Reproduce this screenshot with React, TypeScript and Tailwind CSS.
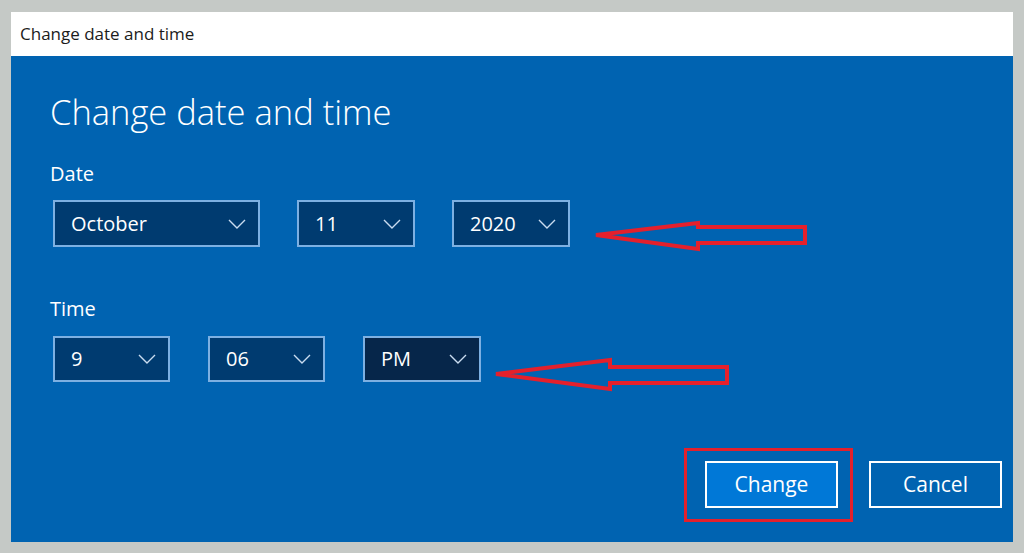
const font = { fontFamily: '"Open Sans", "Noto Sans", Arial, sans-serif' };

function Chevron() {
  return (
    <svg width="18" height="10" viewBox="0 0 18 10" className="text-[#c9dcf0]">
      <polyline points="1,1 9,9 17,1" fill="none" stroke="currentColor" strokeWidth="1.4" />
    </svg>
  );
}

function Dropdown({
  value,
  width,
  height,
  dark,
}: {
  value: string;
  width: string;
  height: string;
  dark?: boolean;
}) {
  return (
    <div
      className={`flex items-center justify-between border-2 border-[#7db0e2] pl-[16px] pr-[12px] text-[20px] text-white ${width} ${height} ${
        dark ? "bg-[#06264a]" : "bg-[#003b70]"
      }`}
    >
      <span>{value}</span>
      <Chevron />
    </div>
  );
}

function Arrows() {
  return (
    <svg
      className="pointer-events-none absolute inset-0 h-full w-full"
      viewBox="0 0 1002 486"
      preserveAspectRatio="none"
    >
      <polygon
        points="585,179 687,167 687,171 794,171 794,187 687,187 687,193"
        fill="none"
        stroke="#e4202c"
        strokeWidth="4"
      />
      <polygon
        points="485,318 599,304 599,311 716,311 716,327 599,327 599,333"
        fill="none"
        stroke="#e4202c"
        strokeWidth="4"
      />
    </svg>
  );
}

export default function App() {
  return (
    <div
      className="h-[553px] w-[1024px] overflow-hidden bg-[#c5c9c6] pb-[11px] pl-[11px] pr-[11px] pt-[12px]"
      style={font}
    >
      <div className="flex h-[530px] w-[1002px] flex-col">
        <div className="flex h-[44px] items-center bg-white pl-[9px] text-[17px] text-[#1b1b1b]">
          Change date and time
        </div>

        <div className="relative flex flex-1 flex-col bg-[#0063b1] pl-[39px] text-white">
          <h1 className="mt-[36px] text-[34.5px] font-light leading-[40px]">
            Change date and time
          </h1>

          <div className="mt-[30px] text-[20px] leading-[24px]">Date</div>
          <div className="ml-[3px] mt-[14px] flex gap-[37px]">
            <Dropdown value="October" width="w-[207px]" height="h-[47px]" />
            <Dropdown value="11" width="w-[118px]" height="h-[47px]" />
            <Dropdown value="2020" width="w-[118px]" height="h-[47px]" />
          </div>

          <div className="mt-[50px] text-[20px] leading-[24px]">Time</div>
          <div className="ml-[3px] mt-[15px] flex gap-[38px]">
            <Dropdown value="9" width="w-[117px]" height="h-[46px]" />
            <Dropdown value="06" width="w-[117px]" height="h-[46px]" />
            <Dropdown value="PM" width="w-[118px]" height="h-[46px]" dark />
          </div>

          <div className="mt-[66px] flex items-start justify-end gap-[16px] pr-[11px]">
            <div className="border-[3px] border-[#e4202c] pb-[11px] pl-[18px] pr-[12px] pt-[10px]">
              <button className="h-[47px] w-[133px] border-2 border-white bg-[#0078d7] text-[21px] text-white">
                Change
              </button>
            </div>
            <button className="mt-[13px] h-[47px] w-[133px] border-2 border-white bg-[#0063b1] text-[21px] text-white">
              Cancel
            </button>
          </div>

          <Arrows />
        </div>
      </div>
    </div>
  );
}
